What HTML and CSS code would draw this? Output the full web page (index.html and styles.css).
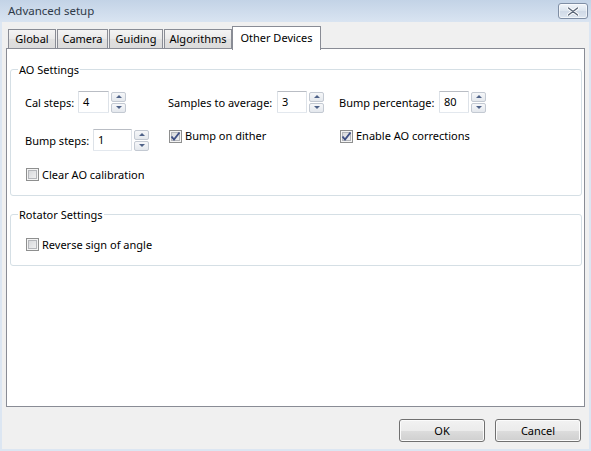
FILE: index.html
```html
<!DOCTYPE html>
<html>
<head>
<meta charset="utf-8">
<title>Advanced setup</title>
<link rel="stylesheet" href="styles.css">
</head>
<body>
<div class="window">
  <div class="titlebar">
    <span class="title">Advanced setup</span>
    <span class="close">
      <svg width="12" height="9" viewBox="0 0 12 9"><path d="M1.5 1 L10.5 8 M10.5 1 L1.5 8" stroke="#ffffff" stroke-width="3.2" stroke-linecap="round" fill="none"/><path d="M1.5 1 L10.5 8 M10.5 1 L1.5 8" stroke="#5b6779" stroke-width="1.4" stroke-linecap="round" fill="none"/></svg>
    </span>
  </div>
  <div class="client">
    <div class="tabs">
      <div class="tab w-global">Global</div>
      <div class="tab w-camera">Camera</div>
      <div class="tab w-guiding">Guiding</div>
      <div class="tab w-algo">Algorithms</div>
      <div class="tab selected">Other Devices</div>
    </div>
    <div class="panel">
      <fieldset class="group ao">
        <legend>AO Settings</legend>
        <div class="grid">
          <div class="cell">
            <span class="lbl l-cal">Cal steps:</span>
            <span class="edit e-31">4</span>
            <span class="spin"><span class="up"></span><span class="down"></span></span>
          </div>
          <div class="cell">
            <span class="lbl l-samples">Samples to average:</span>
            <span class="edit e-30">3</span>
            <span class="spin"><span class="up"></span><span class="down"></span></span>
          </div>
          <div class="cell">
            <span class="lbl l-pct">Bump percentage:</span>
            <span class="edit e-30">80</span>
            <span class="spin"><span class="up"></span><span class="down"></span></span>
          </div>
          <div class="cell">
            <span class="lbl l-bump">Bump steps:</span>
            <span class="edit e-39">1</span>
            <span class="spin"><span class="up"></span><span class="down"></span></span>
          </div>
          <div class="check top">
            <span class="cb"><svg width="11" height="11" viewBox="0 0 11 11"><path d="M1.5 5.5 L4 8.5 L9.5 1.5" stroke="#3e4f84" stroke-width="1.9" fill="none"/></svg></span>
            <span>Bump on dither</span>
          </div>
          <div class="check top">
            <span class="cb"><svg width="11" height="11" viewBox="0 0 11 11"><path d="M1.5 5.5 L4 8.5 L9.5 1.5" stroke="#3e4f84" stroke-width="1.9" fill="none"/></svg></span>
            <span>Enable AO corrections</span>
          </div>
          <div class="check row3">
            <span class="cb"></span>
            <span>Clear AO calibration</span>
          </div>
        </div>
      </fieldset>
      <fieldset class="group rot">
        <legend>Rotator Settings</legend>
        <div class="rot-body">
          <div class="check">
            <span class="cb"></span>
            <span>Reverse sign of angle</span>
          </div>
        </div>
      </fieldset>
    </div>
    <div class="buttons">
      <button class="btn">OK</button>
      <button class="btn">Cancel</button>
    </div>
  </div>
</div>
</body>
</html>
```
FILE: styles.css
```css
html, body {
  margin: 0;
  padding: 0;
}
body {
  width: 591px;
  height: 451px;
  overflow: hidden;
  font-family: "Noto Sans", "Open Sans", sans-serif;
  font-size: 11px;
  color: #000;
}
.window {
  width: 591px;
  height: 451px;
  box-sizing: border-box;
  display: flex;
  flex-direction: column;
  background: #dce6f2;
}
.titlebar {
  height: 22px;
  flex: none;
  display: flex;
  justify-content: space-between;
  align-items: flex-start;
  padding: 0 3px 0 8px;
  background: linear-gradient(#c3d3e6, #d9e4f1);
}
.title {
  line-height: 22px;
  font-size: 11.5px;
  color: #2f3a48;
}
.close {
  margin-top: 3px;
  width: 30px;
  height: 16px;
  box-sizing: border-box;
  border: 1px solid #7f8ea4;
  border-radius: 3px;
  background: linear-gradient(#f1f5fa, #dbe4ee 50%, #cfd9e6 50%, #dde6f0);
  box-shadow: inset 0 0 0 1px rgba(255,255,255,0.6);
  display: flex;
  align-items: center;
  justify-content: center;
}
.client {
  flex: 1;
  margin: 0 2px 2px 2px;
  background: #f0f0f0;
  padding: 4px 4px 0 4px;
  display: flex;
  flex-direction: column;
}
.tabs {
  height: 22px;
  display: flex;
  padding-left: 2px;
  align-items: flex-start;
}
.tab {
  box-sizing: border-box;
  height: 19px;
  margin-top: 3px;
  margin-right: 1px;
  border: 1px solid #898c95;
  border-bottom: none;
  background: linear-gradient(#f4f4f4, #e9e9e9 50%, #e0e0e0 50%, #dcdcdc);
  line-height: 17px;
  text-align: center;
}
.w-global { width: 48px; }
.w-camera { width: 51px; }
.w-guiding { width: 54px; }
.w-algo { width: 68px; margin-right: 0; }
.tab.selected {
  width: 89px;
  height: 24px;
  margin-top: 0;
  margin-bottom: -2px;
  background: #ffffff;
  line-height: 21px;
  position: relative;
  z-index: 1;
}
.panel {
  height: 359px;
  box-sizing: border-box;
  border: 1px solid #898c95;
  background: #ffffff;
  padding: 13px 2px 0 3px;
}
.group {
  margin: 0;
  padding: 0;
  border: 1px solid #d5dfe5;
  border-radius: 3px;
  min-width: 0;
}
.group legend {
  margin-left: 7px;
  padding: 0 1px;
  line-height: 15px;
}
.grid {
  display: grid;
  grid-template-columns: 143px 171px 1fr;
  grid-template-rows: 22px 22px 13px;
  row-gap: 16px;
  padding: 14px 0 15px 14px;
}
.cell {
  display: flex;
  align-items: center;
}
.lbl {
  flex: none;
  white-space: nowrap;
}
.l-cal { width: 53px; }
.l-samples { width: 109px; }
.l-pct { width: 100px; }
.l-bump { width: 68px; }
.edit {
  box-sizing: border-box;
  height: 22px;
  border: 1px solid;
  border-color: #b9bdc4 #dde2e8 #e3e8ee #dde2e8;
  border-radius: 1px;
  background: #fff;
  padding-left: 4px;
  line-height: 20px;
  flex: none;
}
.e-31 { width: 31px; }
.e-30 { width: 30px; }
.e-39 { width: 39px; }
.spin {
  display: flex;
  flex-direction: column;
  gap: 1px;
  margin-left: 2px;
}
.spin span {
  box-sizing: border-box;
  width: 15px;
  height: 10px;
  border: 1px solid #c3c9d2;
  border-radius: 2px;
  background: linear-gradient(#f6f7f9, #e4e8ed);
  display: flex;
  align-items: center;
  justify-content: center;
}
.spin .up::before {
  content: "";
  border-left: 3px solid transparent;
  border-right: 3px solid transparent;
  border-bottom: 3px solid #4f6288;
}
.spin .down::before {
  content: "";
  border-left: 3px solid transparent;
  border-right: 3px solid transparent;
  border-top: 3px solid #4f6288;
}
.check {
  display: flex;
  align-items: center;
  gap: 3px;
  height: 13px;
  line-height: 14px;
  padding-left: 1px;
}
.check.top {
  align-self: start;
  height: 14px;
}
.check.row3 {
  margin-top: 1px;
}
.cb {
  box-sizing: border-box;
  width: 13px;
  height: 13px;
  flex: none;
  border: 1px solid #8e8f8f;
  background: linear-gradient(135deg, #d2d4d7, #f5f5f5);
  box-shadow: inset 0 0 0 1px #f4f4f4, inset 0 0 0 2px #b4b6ba;
  display: flex;
  align-items: center;
  justify-content: center;
}
.cb svg {
  flex: none;
}
.group.rot {
  margin-top: 11px;
}
.rot-body {
  padding: 16px 0 14px 14px;
}
.buttons {
  display: flex;
  justify-content: flex-end;
  gap: 10px;
  padding: 12px 4px 0 0;
}
.btn {
  width: 86px;
  height: 23px;
  box-sizing: border-box;
  border: 1px solid #707070;
  border-radius: 3px;
  background: linear-gradient(#f2f2f2, #ebebeb 50%, #dddddd 50%, #cfcfcf);
  box-shadow: inset 0 0 0 1px #fbfbfb;
  font-family: inherit;
  font-size: 11px;
  color: #000;
  padding: 0;
}
```
